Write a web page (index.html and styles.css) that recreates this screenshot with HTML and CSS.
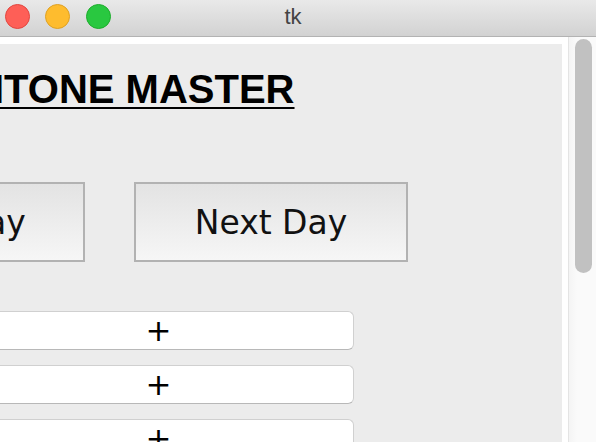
FILE: index.html
```html
<!DOCTYPE html>
<html>
<head>
<meta charset="utf-8">
<link rel="stylesheet" href="styles.css">
</head>
<body>
<div class="window">
  <div class="titlebar">
    <div class="lights">
      <span class="light red"></span>
      <span class="light yellow"></span>
      <span class="light green"></span>
    </div>
    <div class="wintitle">tk</div>
  </div>
  <div class="main">
    <div class="viewport">
      <div class="panel">
        <div class="title">ITONE MASTER</div>
        <div class="nav">
          <button class="navbtn prev">ay</button>
          <button class="navbtn">Next Day</button>
        </div>
        <div class="rows">
          <div class="row">+</div>
          <div class="row">+</div>
          <div class="row">+</div>
        </div>
      </div>
    </div>
    <div class="scrollbar"><div class="thumb"></div></div>
  </div>
</div>
</body>
</html>
```

FILE: styles.css
```css
html, body {
  margin: 0;
  padding: 0;
}
body {
  width: 596px;
  height: 442px;
  overflow: hidden;
  background: #ffffff;
}
.window {
  display: flex;
  flex-direction: column;
  width: 596px;
  height: 442px;
}
.titlebar {
  position: relative;
  height: 36px;
  border-bottom: 1px solid #b3b3b3;
  background: linear-gradient(#e9e9e9, #d2d2d2);
  display: flex;
  align-items: center;
  flex-shrink: 0;
}
.lights {
  display: flex;
  gap: 15px;
  padding-left: 5px;
  margin-top: -3px;
}
.light {
  width: 23px;
  height: 23px;
  border-radius: 50%;
  display: block;
}
.red { background: #fe5f57; border: 1px solid #e2463f; }
.yellow { background: #febc2e; border: 1px solid #dfa123; }
.green { background: #29c840; border: 1px solid #1dad2b; margin-left: 1px; }
.wintitle {
  position: absolute;
  left: 0;
  right: 10px;
  top: 0;
  line-height: 34px;
  text-align: center;
  font-family: "Liberation Sans", Arial, sans-serif;
  font-size: 22px;
  color: #444;
}
.main {
  flex: 1;
  display: flex;
  min-height: 0;
}
.viewport {
  width: 568px;
  box-sizing: border-box;
  padding: 7px 6px 0 0;
  background: #ffffff;
  display: flex;
  flex-shrink: 0;
}
.panel {
  flex: 1;
  background: #ececec;
  overflow: hidden;
}
.title {
  margin: 22px 0 0 -7px;
  font-family: "Liberation Sans", Arial, sans-serif;
  font-weight: bold;
  font-size: 40px;
  line-height: 46px;
  text-decoration: underline;
  text-decoration-thickness: 2px;
  text-underline-offset: 4px;
  color: #000;
  white-space: nowrap;
}
.nav {
  display: flex;
  gap: 49px;
  margin: 70px 0 0 -189px;
}
.navbtn {
  width: 274px;
  height: 80px;
  box-sizing: border-box;
  border: 2px solid #b2b2b2;
  background: linear-gradient(#e3e3e3, #f6f6f6);
  font-family: "DejaVu Sans", Verdana, sans-serif;
  font-size: 33px;
  color: #111;
  padding: 0;
  flex-shrink: 0;
}
.navbtn.prev {
  text-align: left;
  padding-left: 173px;
}
.rows {
  display: flex;
  flex-direction: column;
  gap: 15px;
  margin: 49px 0 0 -37px;
  width: 391px;
}
.row {
  height: 39px;
  box-sizing: border-box;
  background: #ffffff;
  border: 1px solid #d0d0d0;
  border-bottom-color: #b8b8b8;
  border-radius: 6px;
  display: flex;
  align-items: center;
  justify-content: center;
  font-family: "DejaVu Sans", Verdana, sans-serif;
  font-size: 31px;
  line-height: 1;
  color: #000;
  flex-shrink: 0;
}
.scrollbar {
  width: 28px;
  box-sizing: border-box;
  border-left: 1px solid #e4e4e4;
  background: linear-gradient(90deg, #f4f4f4, #fafafa 30%);
  padding: 2px 4px 0 6px;
  flex-shrink: 0;
}
.thumb {
  width: 17px;
  height: 234px;
  border-radius: 8.5px;
  background: #c1c1c1;
}
```
